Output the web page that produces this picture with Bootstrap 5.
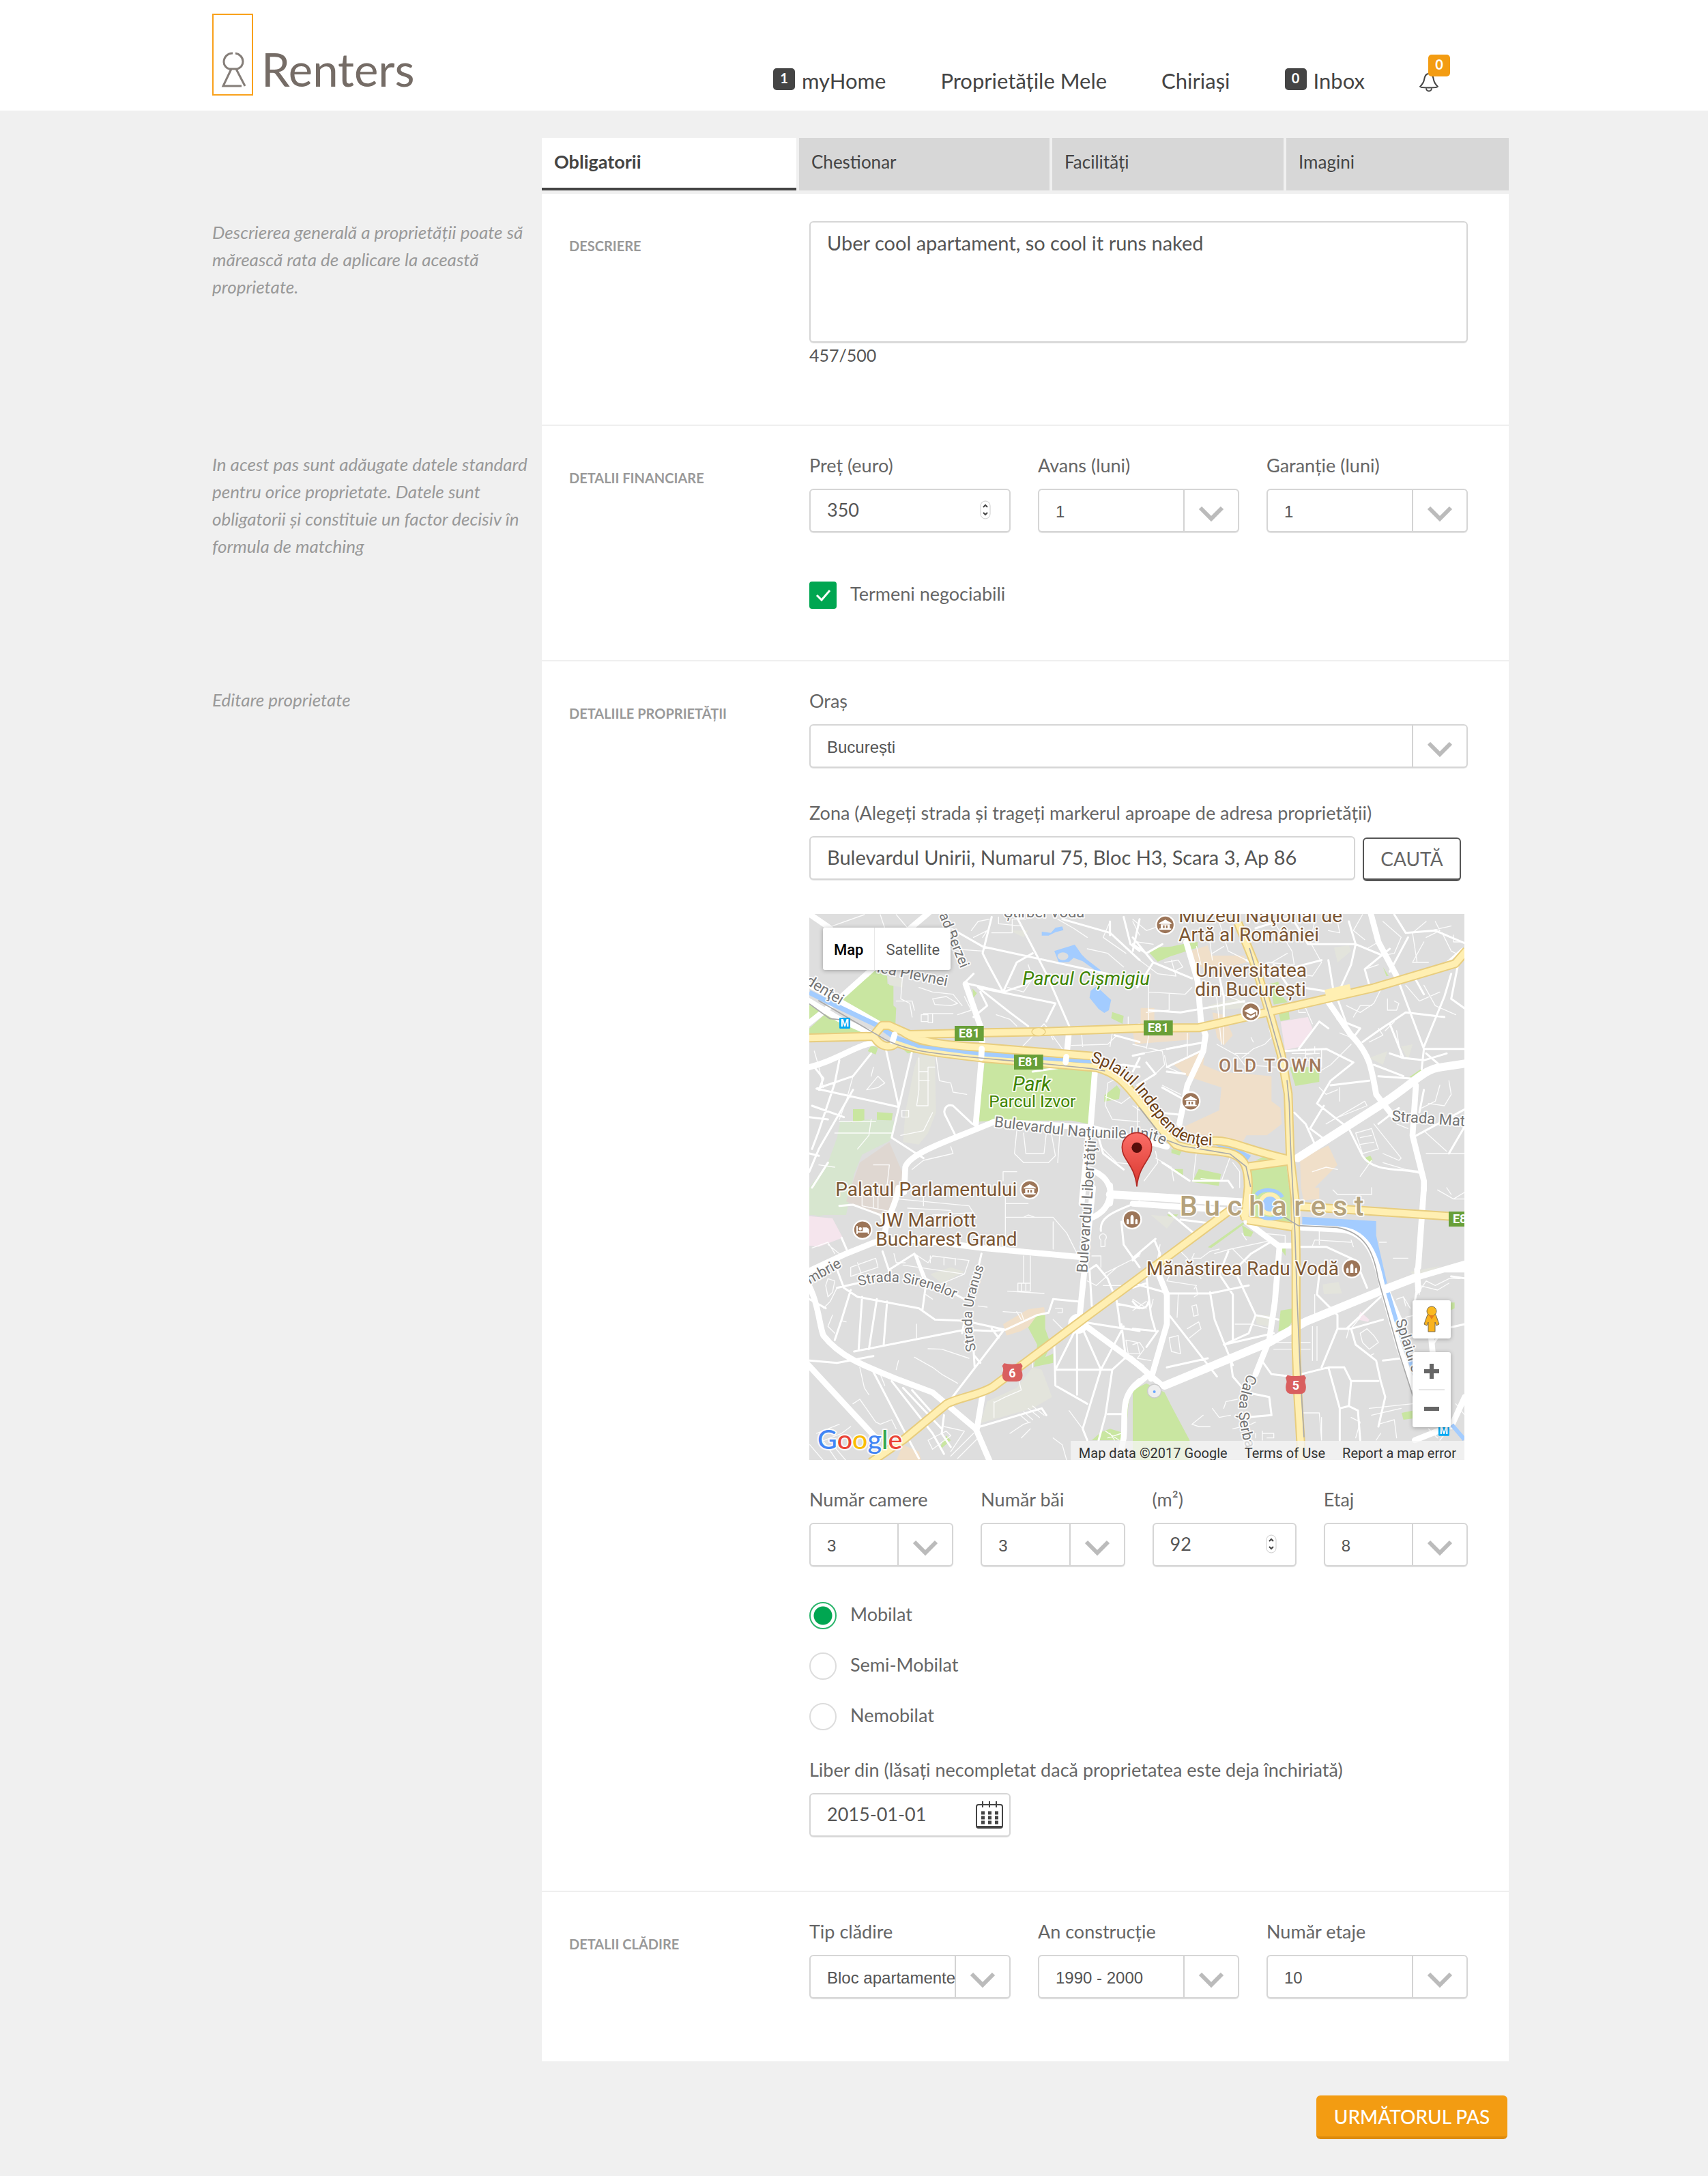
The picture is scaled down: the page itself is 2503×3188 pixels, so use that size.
<!DOCTYPE html>
<html lang="ro">
<head>
<meta charset="utf-8">
<meta name="viewport" content="width=device-width, initial-scale=1">
<title>Renters – Editare proprietate</title>
<link href="https://cdn.jsdelivr.net/npm/bootstrap@5.3.0/dist/css/bootstrap.min.css" rel="stylesheet">
<style>
body{background:#f0f0f0;color:#555;font-family:Lato,"Open Sans",sans-serif;font-size:27px;line-height:40px}
.page-wrap{max-width:1919px;margin:0 auto}
.site-head{background:#fff;height:162px}
.brand-link{padding:20px 0 22px 19px}
.main-nav{gap:80px;padding:0 103px 24px 0}
.main-nav a{color:#444;font-size:31px;text-decoration:none;display:flex;gap:10px}
.count-tag{width:32px;height:32px;border-radius:5px;background:#444;color:#fff;font-size:20px;line-height:28px;font-weight:700;text-align:center;margin-top:2px;flex:none}
.bell-link{width:28px;padding-top:9px}
.bell-link .count-tag{background:#f39c12;position:absolute;left:13px;top:-20px}
.side-note{flex:0 0 502px;padding:36px 14px 0 19px;font-style:italic;font-size:26px;color:#999}
.side-note p{margin:0}
.step-tabs{gap:4px;margin:40px 0 5px}
.step-tabs a{background:#d7d7d7;color:#444;font-size:26px;padding:15px 18px 18px;text-decoration:none;border-bottom:4px solid #d7d7d7}
.step-tabs a.active{background:#fff;font-size:27px;font-weight:700;border-color:#444}
.tab-a{flex:337 1 0}.tab-b{flex:331 1 0}.tab-c{flex:303 1 0}.tab-d{flex:290 1 0}
.panel{background:#fff;border-bottom:2px solid #efefef;padding:38px 60px 75px 40px}
.panel-text{padding:40px 60px 84px 40px}
.panel-end{border:0;padding-bottom:92px}
.panel h2{flex:0 0 352px;margin:26px 0 0;font-size:20px;line-height:24px;font-weight:700;color:#999}
.panel-text h2{margin-top:24px}
.stack{min-width:0}
.field label{display:block;margin-bottom:14px;color:#666}
.field-next{margin-top:46px}
.g-wide{--bs-gutter-x:40px}
.form-control,.form-select{border:2px solid #d6d6d6;border-radius:6px;height:64px;color:#555;box-shadow:0 1px 1px #e4e4e4}
.form-control{font-size:29px;padding:0 24px 4px}
.form-control.digits{font-size:27px}
textarea.form-control{height:178px;padding-top:10px;line-height:40px;resize:none}
input[type=number]{appearance:textfield;-moz-appearance:textfield}
input[type=number]::-webkit-inner-spin-button{appearance:none;-webkit-appearance:none;margin:0}
.form-select{font:24px/36px "Liberation Sans",Arial,sans-serif;padding:3px 79px 0 24px;background-image:url("data:image/svg+xml,%3Csvg xmlns='http://www.w3.org/2000/svg' viewBox='0 0 80 60'%3E%3Cpath d='M1 0V60' stroke='%23d3d3d3' stroke-width='2'/%3E%3Cpath d='M25 26 41 42 57 26' fill='none' stroke='%23bbb' stroke-width='6'/%3E%3C/svg%3E");background-size:80px 60px;background-position:right 0 center}
.char-count{font-size:25px;line-height:36px}
.over-icon{position:absolute;right:29px;top:17px}
.over-cal{right:11px;top:12px}
.tick{gap:20px;line-height:36px;color:#666}
.tick .form-check-input{width:40px;height:40px;margin:0;border:2px solid #ddd;flex:none}
.tick .form-check-input[type=checkbox]{border-radius:4px}
.tick .form-check-input[type=checkbox]:checked{background-color:#00a651;border-color:#00a651;background-size:40px;background-image:url("data:image/svg+xml,%3Csvg xmlns='http://www.w3.org/2000/svg' viewBox='0 0 40 40'%3E%3Cpath d='M11 20l7 7 12-14' fill='none' stroke='%23fff' stroke-width='3'/%3E%3C/svg%3E")}
.tick .form-check-input[type=radio]:checked{background:radial-gradient(circle,#00a651 13px,#fff 14px);border-color:#2bb56c}
.tick-solo{margin-top:72px}
.radio-list{gap:34px;margin:52px 0 38px}
.find-row{gap:11px}
.btn-find{height:64px;width:144px;flex:none;margin:2px 10px 0 0;padding:0;border:2px solid #555;border-bottom-width:4px;border-radius:6px;font-size:28px;color:#666;background:#fff}
.foot-row{padding:50px 2px}
.btn-next{height:64px;width:280px;padding:2px 0 0;border:0;border-bottom:4px solid #dd8b0d;border-radius:6px;background:#f39c12;color:#fff;font-size:28px;font-weight:500}
.map-box{max-width:960px;margin:48px 0 38px;font-family:Roboto,sans-serif;overflow:hidden}
.map-box>svg{width:100%;height:auto;display:block}
.map-ui{position:absolute;background:#fff;border-radius:3px;box-shadow:0 1px 6px rgba(0,0,0,.3)}
.map-ui button{border:0;background:none;padding:0;display:block}
.map-kind{left:20px;top:20px;height:62px;font-size:22px}
.map-kind button{padding:3px 16px 0}
.map-kind button:first-child{font-weight:500;color:#000;border-right:1px solid #e8e8e8}
.map-kind button:last-child{color:#565656}
.map-man{right:20px;bottom:178px;width:56px;height:56px}
.map-zoom{right:20px;bottom:48px;width:56px}
.map-zoom button{width:56px;height:55px}
.map-zoom button svg,.map-man svg{display:block;margin:auto}
.map-zoom hr{position:absolute;left:9px;right:9px;top:54px;margin:0;border-top:2px solid #e6e6e6;opacity:1}
.map-foot{position:absolute;right:0;bottom:0;height:28px;padding:0 12px;gap:25px;font-size:20px;line-height:36px;background:rgba(245,245,245,.75);color:#333}
.map-foot a{color:#333;text-decoration:none}
.pale{fill:none;stroke:#fff;stroke-linejoin:round;stroke-linecap:round}
.cas{fill:none;stroke:#e8cd7e;stroke-width:40;stroke-linejoin:round}
.yel{fill:none;stroke:#ffefb2;stroke-width:28;stroke-linejoin:round}
.halo text{paint-order:stroke;stroke:#fff;stroke-opacity:.85;stroke-width:12px;stroke-linejoin:round}
</style>
<script src="https://cdn.jsdelivr.net/npm/bootstrap@5.3.0/dist/js/bootstrap.bundle.min.js"></script>
</head>
<body>
<header class="site-head">
  <div class="page-wrap d-flex justify-content-between align-items-end h-100">
    <a class="brand-link d-block" href="#" aria-label="Renters">
      <svg width="310" height="120" viewBox="0 0 310 120" class="d-block">
        <rect x="1" y="1" width="58" height="118" fill="none" stroke="#f9a11b" stroke-width="2"/>
        <g fill="none" stroke="#857e79" stroke-width="3"><path d="M30 58c-8 0-13 6-13 13 0 5 4 9 8 10h12c5-2 8-6 8-11 0-6-5-11-11-12M28 81 16 106h27M35 81l13 25"/></g>
        <text x="72" y="107" font-family="Lato" font-size="67" fill="#756c66">Renters</text>
      </svg>
    </a>
    <nav class="main-nav d-flex" aria-label="Meniu">
      <a href="#"><span class="count-tag">1</span>myHome</a>
      <a href="#">Proprietățile Mele</a>
      <a href="#">Chiriași</a>
      <a href="#"><span class="count-tag">0</span>Inbox</a>
      <a href="#" class="bell-link position-relative" aria-label="Notificări">
        <svg width="28" height="28" viewBox="0 0 28 28" fill="none" stroke="#444" stroke-width="2"><path d="M14 1C9 1 8 5 7 10S4 17 1 20c0 2 26 2 26 0-3-3-5-5-6-10S19 1 14 1zM10 22c0 6 8 6 8 0"/></svg>
        <span class="count-tag">0</span>
      </a>
    </nav>
  </div>
</header>

<main class="page-wrap">
 <form>
  <div class="d-flex">
    <div class="side-note pt-0"></div>
    <nav class="step-tabs d-flex flex-grow-1" aria-label="Pași">
      <a class="tab-a active" href="#">Obligatorii</a>
      <a class="tab-b" href="#">Chestionar</a>
      <a class="tab-c" href="#">Facilități</a>
      <a class="tab-d" href="#">Imagini</a>
    </nav>
  </div>

  <section class="d-flex">
    <aside class="side-note"><p>Descrierea generală a proprietății poate să mărească rata de aplicare la această proprietate.</p></aside>
    <div class="panel panel-text d-flex flex-grow-1">
      <h2>DESCRIERE</h2>
      <div class="stack flex-grow-1">
        <textarea class="form-control" aria-label="Descriere">Uber cool apartament, so cool it runs naked</textarea>
        <div class="char-count">457/500</div>
      </div>
    </div>
  </section>

  <section class="d-flex">
    <aside class="side-note"><p>In acest pas sunt adăugate datele standard pentru orice proprietate. Datele sunt obligatorii și constituie un factor decisiv în formula de matching</p></aside>
    <div class="panel d-flex flex-grow-1">
      <h2>DETALII FINANCIARE</h2>
      <div class="stack flex-grow-1">
        <div class="row g-wide">
          <div class="col-4 field"><label for="pret">Preț (euro)</label>
            <div class="position-relative"><input id="pret" type="number" class="form-control digits" value="350">
            <svg class="over-icon" width="16" height="28" viewBox="0 0 16 28" fill="none"><rect x="1" y="1" width="14" height="26" rx="7" stroke="#ccc" stroke-width="1"/><path d="M5 10l3-3 3 3M5 18l3 3 3-3" stroke="#444" stroke-width="2"/></svg></div></div>
          <div class="col-4 field"><label for="avans">Avans (luni)</label><select id="avans" class="form-select"><option>1</option></select></div>
          <div class="col-4 field"><label for="garantie">Garanție (luni)</label><select id="garantie" class="form-select"><option>1</option></select></div>
        </div>
        <div class="tick tick-solo d-flex"><input class="form-check-input" type="checkbox" id="neg" checked><label for="neg">Termeni negociabili</label></div>
      </div>
    </div>
  </section>

  <section class="d-flex">
    <aside class="side-note"><p>Editare proprietate</p></aside>
    <div class="panel d-flex flex-grow-1">
      <h2>DETALIILE PROPRIETĂȚII</h2>
      <div class="stack flex-grow-1">
        <div class="field"><label for="oras">Oraș</label><select id="oras" class="form-select"><option>București</option></select></div>
        <div class="field field-next"><label for="zona">Zona (Alegeți strada și trageți markerul aproape de adresa proprietății)</label>
          <div class="d-flex find-row"><input id="zona" class="form-control" value="Bulevardul Unirii, Numarul 75, Bloc H3, Scara 3, Ap 86"><button type="button" class="btn btn-find">CAUTĂ</button></div></div>

        <div class="map-box position-relative">
          <svg viewBox="0 0 2880 2400" role="img" aria-label="Harta București">
            <rect width="2880" height="2400" fill="#dedede"/>
            <!-- parks, squares, blocks -->
            <g transform="translate(-18 -27)">
              <g fill="#c9e6a1"><path d="M300 275 360 300 362 335H388V430L400 440 395 545 155 410zM18 400 80 440 18 495zM100 455 285 550 18 558V530zM790 665 1262 712 1248 950 1170 935H830L760 940zM210 885h50v55h-50zM315 898l70 5-5 32h-65zM172 940h34v45h-34zM310 940l38 8-3 28h-35zM1350 458l50 17-5 35-50-25zM1315 825l55-45 15 20-5 40-65 12zM735 355l20 20-15 20zM290 605l30 10-10 30-35-15zM430 620l70 15-50 5z"/></g>
              <path fill="#d7e6cf" d="M155 935 215 945 270 930 390 935 385 1000 370 1025 250 1085 215 1170 180 1350 18 1350V1230L100 1120 140 1010z"/>
              <path fill="#dfd7d1" d="M370 1030 430 1170 400 1300 340 1360 180 1290 240 1120z"/>
              <path fill="#e3e4dc" d="M480 700 500 645 570 650 575 900 540 990 500 1040 430 1030 440 900zM360 300l60 10 10 40-60-10zM900 100l60 30 20-30z"/>
              <path fill="#a3ccff" d="M1095 190 1185 162 1215 205 1235 225 1300 275 1290 285 1220 235 1180 220 1160 238 1115 240zM1040 105 1080 110 1100 88 1130 82 1135 98 1100 107 1070 122 1040 122zM1280 345 1345 405 1335 450 1315 462 1290 445 1250 395 1255 365z"/>
              <ellipse cx="1133" cy="213" rx="24" ry="17" fill="#dedede"/>
            </g>
            <g transform="translate(1422 -27)">
              <path fill="#f0dfc9" d="M320 600 310 690 380 720 500 730 610 740 610 850 650 880 655 950 590 1000 500 1000 480 1035 240 985 230 960 380 890 390 790 240 740 180 690 270 650zM255 190 330 165 345 210 490 210 500 240 330 280 260 230zM35 440H95V520H35zM0 545H130L250 550V580L60 595 10 600zM350 460 400 470 440 560 400 605 370 570zM735 1100 860 1045 900 1130 800 1230H740z"/>
              <path fill="#f5e5ed" d="M650 500 770 480 790 530 740 610 670 625z"/>
              <path fill="#c9e6a1" d="M70 195 110 175 170 170 240 155 285 150V175L160 215 110 237zM600 335 640 325 650 380 680 415 620 425zM640 455l45-10 5 45-40 8zM690 700H820V765L715 783zM1215 745 1265 710 1270 718 1225 745zM290 1148 388 1170 378 1222 262 1205zM520 1135 675 1130 690 1250H510zM185 1148h36v27l-36-10zM170 1060l45 10-10 18-35-10zM1015 1100l30-10 10 20-20 15zM1100 260l25 40h-10zM540 1110l50-22 80 12z"/>
              <path fill="#e3e4dc" d="M885 175 950 165 960 190 900 240zM1040 660 1120 630 1100 690zM1180 610l50-10-20 70zM330 430 480 390 500 440 350 450z"/>
              <path fill="#a3ccff" d="M350 1038 430 1042 520 1090 505 1110 440 1078z"/>
            </g>
            <g transform="translate(-18 1203)">
              <path fill="#d7e6cf" d="M18 0H170L178 60 130 110 60 125 18 115z"/>
              <path fill="#f5e5ed" d="M18 125 120 135 165 220 60 260 18 255z"/>
              <path fill="#f0dfc9" d="M870 600 980 535 1050 525 1055 550 1020 590 950 630 885 650zM430 1130 500 1160 510 1200H400z"/>
              <path fill="#c9e6a1" d="M980 615 1020 560H1055V620L1080 690 1055 745 1090 730V770L1005 788 1020 690zM1470 870 1430 910 1420 960 1410 1110 1260 1110 1300 1075 1340 1060 1390 1075 1410 920zM590 1145 620 1090 640 1110 600 1145z"/>
              <path fill="#e3e4dc" d="M550 380 640 350 700 370 600 420zM800 940 930 880 1000 790 1040 800 1085 920 1000 970 770 1035z"/>
            </g>
            <g transform="translate(1422 1203)">
              <path fill="#c9e6a1" d="M0 890 60 860 140 900 170 960 250 1110 250 1200H0zM515 0H700L690 150 510 135zM480 165 530 195 520 215 490 212zM330 262 485 152 490 160 345 265zM650 540 700 532V590L680 620 640 632zM1182 990 1230 980V1015L1190 1020zM1390 505h25v25l-20 10zM650 270l22-20v50zM150 118h50l-25 25z"/>
              <path fill="#e3e4dc" d="M835 425 905 415 920 465 840 468zM540 560 620 560 600 610 545 600zM80 120 190 130 150 180zM1220 370 1350 345 1260 410z"/>
              <path fill="#f5e5ed" d="M1000 545 1040 580 1035 590 990 580z"/>
              <path fill="#f0dfc9" d="M740 0H820V50L750 55z"/>
              <path fill="#a3ccff" d="M745 128 1070 147V210L1118 420 1104 428 1045 260 980 195 900 168 745 165z"/>
            </g>
            <!-- lanes -->
            <g class="pale" stroke-width="4" stroke-opacity=".9">
              <path transform="translate(-18 -27)" d="M120 80 260 30M330 30 350 90M400 30 460 100 640 90M730 100 760 60 810 50M740 130 800 100 780 130M820 110h90v-60h60M850 40v30l100 10M640 180 780 190M980 250 1000 310 960 370 890 350M1110 50 1180 90 1240 130M1340 60 1310 130 1410 200M1240 180 1330 200 1400 260M430 270 420 400 460 420 470 480M400 410 470 410 480 450M500 350 560 370 650 380 690 430M560 400 620 390 670 420 640 430 570 425zM520 465h130M560 465v40h-20M510 470h30v30h-30zM700 390 730 450 670 470M840 470 900 490 930 520M950 615 1050 510 1130 620M1060 520 1090 580M1170 605 1330 600 1370 560M1215 550 1220 610M1350 550 1340 610M1420 480V520L1470 510M500 660V800L490 870H540V700H570M540 720H500M545 760H500M575 650 590 760 640 770 650 810 710 820M40 630 60 700 80 790M270 800 320 740 350 770 320 790zM300 700 290 740M210 740 180 850 150 930M425 890h30v30h-30zM150 940H310M290 930 280 1000 230 1060M130 990H380M640 1050 650 1080 520 1110 470 1150M930 980 920 1080 960 1120H1070L1100 1090 1080 980M960 990 970 1080H1050L1060 990M1120 980 1110 1120M870 1200V1160H930M1320 830 1390 860 1470 800M1390 700 1370 750 1330 770 1320 870 1350 930 1470 940M1300 1050 1370 1120 1470 1130M1440 60 1470 120M420 1000 520 980 560 900M60 1130 130 1140M300 1130 370 1130 360 1220"/>
              <path transform="translate(1422 -27)" d="M0 50 60 100 120 80 180 60M20 150 90 160M30 230 110 290 190 300 170 230M140 240 200 230 220 260 180 280M70 330V560L60 620M70 370 230 380 260 350M160 380V450L60 460M340 330 370 400 390 600M270 370 340 360 500 420M330 80 350 230M280 170 300 250M370 30 420 190 500 230M400 170 350 200M620 60 700 190 710 250 590 240M560 270 680 200M800 60 780 150 830 240 790 300 730 290M900 60 910 110 860 100M1010 30 970 100 1020 140M1030 180 1080 150M1100 60 1180 130M1290 60 1230 110 1310 100 1400 80M1360 110 1400 190 1440 210M1180 130 1150 200 1100 210M1230 110 1250 240M1280 150 1230 240H1300M1410 120v30h30M1330 60 1350 100 1290 130M1020 270 1080 250M940 430 1000 460 1060 420 1090 360M970 480 1000 430 1050 430M1120 400v50h40l10-30-20-10M1200 340 1260 410 1350 370M1280 340 1330 430 1420 470M910 550 960 570M1110 540 1150 500M1160 540 1180 660M1040 590 1100 560 1080 530M960 600 870 690 820 720M800 610 800 640 760 645M830 620V700M700 640H820M700 670H820M760 620V680M700 430 760 440 790 510M730 440v20h30M240 550v100M520 570 530 590M600 530 610 570 580 600 530 620 480 660M370 600 460 650 490 690 630 700M140 650 150 700 220 730M130 780 210 820M40 640 150 620 240 600M0 600 130 630 140 690 90 740M400 520V600M450 640H510M820 790 850 820 900 800M910 790v60M880 930 1030 870 1020 850 850 950M980 990 1050 970 1080 1060 1010 1080zM1000 1010 1050 1000M1000 1040 1060 1030M1160 950 1210 970M1060 950 1180 1100 1170 1110 1100 1080M1270 880 1330 850 1350 780M1300 860 1370 870 1400 820 1390 760M1280 980 1380 1070M1290 1080 1460 1080M1100 1120 1200 1150 1280 1160M1000 1180 1050 1110M790 1160 850 1140 900 1150M280 1070 265 1200M430 1090 390 1200 300 1190M440 1120 470 1160V1230M100 1070 110 1120 50 1200M100 1100 170 1140 180 1200M20 870V960M0 870 30 890"/>
              <path transform="translate(-18 1203)" d="M250 30V80L400 110M300 20V90M320 30V90M410 50 720 80 740 110 560 120M520 0v80M450 90 640 100M880 30V250M880 130H1090L1150 200 1190 280M960 130 980 120 1010 130M1090 150V270M880 70H980M960 300V420M990 300V420M935 420H990V455H935zM950 420v35M970 420v35M890 455 1050 465M200 350 310 310 320 350 230 380 200 390zM230 330 250 390M390 290 400 330H440M480 290 540 330 560 300 720 320 700 380 580 430M550 300V330M610 310v30M660 310v30M30 265 100 240 130 290M100 250 150 290M90 430 100 400 130 410 120 460 100 480zM140 440 110 500 80 530M120 560 100 610 130 640M160 585 180 590M490 600V660M540 708 600 710 720 750M480 745 560 790 600 820 670 860M430 340 700 380M530 470 560 490M760 520 800 525M870 545 950 550 960 580M930 545 950 580M1100 530H1130V550H1110M1090 580 1150 640M1090 700H1080M1000 760V790M830 940V1010M940 850 950 890 880 920 830 945M1260 300H1300V350M1240 410 1280 430 1370 350M1310 380 1470 300M1310 430 1400 430M1300 260v-30a15 15 0 1 1 18 0v28zM1410 670 1460 680 1470 730H1420zM1160 980 1220 1060M1090 1100 1130 1130 1150 1200M240 790 260 880 280 910M330 820 350 870M410 760 400 800M210 950 240 930 310 1030 330 1040 380 1020 400 1060M50 1080 150 1040M60 1120 160 1080 200 1050M540 1110 620 1070 640 1090 560 1150zM610 1050 700 1070 640 1160M640 1180 740 1080M670 1190 760 1100M900 1080 960 1040 990 1030M980 970 1030 1010M1000 960 1050 1000M960 985 1000 1020M940 995 980 1030M950 1100 990 1060M120 1130 180 1200M70 1100 140 1200M20 1130 80 1200M1320 1070 1380 1110M1340 1080 1360 1110M1330 1100 1390 1080"/>
              <path transform="translate(1422 1203)" d="M880 10 900 30H1050V0M1340 10 1410 50 1460 20M1380 0 1400 30M1410 50H1460M790 255 800 230 960 240M820 170V250M960 230 970 260M1085 240h30M1145 310h65M270 290 260 310 300 310 340 280 380 270M190 260 240 310 300 400M200 350 170 370 150 410 280 430 270 445M120 250 110 310M360 290 430 270 620 230M440 270 500 330M480 200 500 230M560 200 670 210V250M0 490 60 530M60 500 0 540M80 530 90 490M200 470 195 570M270 480 285 470 280 440M260 520l20-5 8 45-20 5zM240 620 290 590 300 620 250 660M160 660 200 650 210 730 170 720zM0 690 30 680 50 710 20 750 80 760M450 600 520 600 600 620M270 800 300 790M350 970 380 1010 430 1000M400 970 410 940 460 930M440 1060 520 1040 540 1030M570 1070V1110M570 1080H620V1100H590M540 1100V1080M790 610V760M810 610V760M800 470V580H740M610 680H780M620 710H780M1000 640 1030 620 1060 650 1080 680 1040 710 1010 680zM940 660 950 620M960 620 1000 570M1040 740 1060 730M1160 490 1190 480 1200 520M1190 480 1220 530M1250 470 1290 410 1330 430 1390 400 1440 400M1260 470V430L1340 450 1390 420M1240 560 1200 570M1040 970 1230 950M1050 1000 1180 970M1080 1040 1150 1020 1160 1100M1090 1080 1070 1110M960 1010 1000 1030 980 1100M830 1010V1110M750 990 820 990 830 1110M310 1000 260 1040 290 1050 340 1050M1350 1110 1390 1060M1300 1060 1340 1100M1420 950 1460 1000"/>
            </g>
            <g class="pale" stroke-width="9">
              <path transform="translate(-18 -27)" d="M820 40 780 200 800 240 870 370 930 240 1000 200M640 90 780 170 1330 290M930 40 1060 290 1165 530M1130 50 1340 110 1470 230M1400 40 1430 160 1470 190M1340 60V120M980 520 900 460 760 350 1100 420M700 330 870 370 960 340 1000 310M770 370 800 430 740 480M700 330 740 290M350 600 410 870M470 630 380 1010 520 1100M290 640 210 740 50 795 410 875M40 700 80 750 60 800M150 670 130 770 60 980 30 1060M18 920 100 930M30 870 170 920M210 800 60 1060 18 1160M18 1080 60 1090M735 950 650 870C620 860 600 890 620 920L660 1000M1290 700 1400 690 1470 700M1470 660 1440 720M1360 560 1470 590M1290 1010 1310 1080 1400 1150M1060 500 1100 420M100 1120 30 1230M1000 720 1140 700"/>
              <path transform="translate(1422 -27)" d="M0 130 90 240 20 350M0 160 60 200 130 160M30 50 0 190M90 240 260 310M70 450 210 460 490 410M500 230 600 290 830 230M540 90 700 40M620 250 680 340 870 370M860 230 880 350M710 60 770 160 980 160 1100 210M980 160 960 250 910 360M980 160 950 60M1150 30 1200 110 1330 100 1470 160M1130 180 1020 270 1040 340M1210 130 1130 280M1160 300 1280 620 1270 710M1280 380 1230 290 1370 250 1450 180M1400 290 1370 390 1280 610M1370 480 1200 460 1080 540 1010 590M1430 250 1400 400 1470 450M1130 510 1190 660 1130 640M1190 660 1280 670 1380 640M1280 620 1460 620M1290 640 1360 700M1080 740 1220 750M1060 690 1190 740M900 490 1000 530 970 570M900 400 940 510M730 620 820 500 860 530M650 630 850 620 970 680 870 760 810 860 950 970M870 780 1040 760M710 900 760 950 810 1060M840 870 780 970 860 1030M950 970 1010 1090C1060 1170 1200 1140 1280 1170M1080 950 1170 880M1280 800 1260 900M1390 1080 1460 960M1470 880 1230 1010M150 620 320 590M150 700 320 620M0 650 50 640M150 720 230 730M130 790 220 840M60 680 100 730 20 780M210 910 120 900M400 490V390L380 300M130 1120 250 1200M265 1200H420L440 1230"/>
              <path transform="translate(-18 1203)" d="M150 80 210 75 330 120 360 200M160 220 190 290M140 360 170 440 230 480 500 530 570 580 700 585 880 625 1020 560 1070 550 1090 490 1200 500M340 280 370 370M370 360 480 290 530 430 515 540M490 300 530 400 700 490M140 440 230 420M200 450 160 580 130 670M250 480 235 710M315 490 280 710M360 500 345 690M215 720 700 625 820 630 880 625M820 620 850 660M775 290 740 440M740 710 745 790M870 630 640 930M745 740 770 770M300 810 430 1060 500 1190M380 850 560 1080 610 1170M430 880 600 1060M470 890 550 980M1185 630 1100 800H1350L1405 750M1195 600V910M1215 610 1300 800 1400 610M1220 590 1470 630M1095 690 1100 870 1240 950M1350 800 1320 1000 1290 1110M1300 800 1220 1060 1240 1110M1330 995H1390M1390 600 1410 750M1385 610 1370 500 1330 400 1280 340 1250 360 1260 520M1370 510 1470 530M1390 150 1400 250 1470 350M1300 190C1290 120 1380 100 1470 60M18 760 140 770 300 740M610 1000 600 1080 640 1140M770 1050 1040 970 1060 1000M18 490 90 530M1440 320 1470 290M700 585 690 640"/>
              <path transform="translate(1422 1203)" d="M160 110 280 210M210 140 370 160M100 225 0 310M95 230 120 290 110 380M0 420 160 465H340L510 430M60 390 80 560 100 630 0 620M60 420 0 440M0 500C30 540 60 540 70 500M160 560 370 830M150 790 330 750M340 460 360 580 440 780M380 380 440 470 440 670M460 390 540 560 510 640 400 690M540 560 640 580M400 690 620 640M430 760 440 830 500 900 600 920 610 1000 490 1010M560 750 610 820 700 830 860 790 930 790 960 850H1080M710 260 850 260 980 320 1030 440M820 380 810 470 900 560V620L830 790M900 620H960L980 690 1070 760 1090 850 1110 920 1080 1050M960 620 1100 580M960 850 950 960 910 970V1110M950 960 990 980 1000 1110M1090 480 940 620M1400 390 1470 400M1250 440 1240 500M1310 700 1370 620 1460 600M1100 760 1180 750M420 280 380 380M620 230 520 290 430 380M500 900 600 920M860 790 910 970M110 630 60 700"/>
            </g>
            <!-- streets -->
            <g class="pale" stroke-width="26">
              <path transform="translate(-18 -27)" d="M0 15 110 90M545 20 450 100M300 265 150 400 0 520M705 335 770 520 780 610 750 950M0 705C150 670 220 600 320 590M1160 540 1145 690M1275 700 1255 960M435 1250 440 1140C460 1070 700 1000 830 940L1250 965 1480 1020M1245 1000 1215 1300M1250 1150C1340 1180 1350 1240 1340 1300M0 330 150 410 350 525M0 400 150 490 310 560"/>
              <path transform="translate(1422 -27)" d="M235 150 285 320 300 500 320 560 310 630 240 780 205 950M0 1010 150 1050M1045 20 1080 150 1160 300M850 400 960 560C1040 640 1050 700 1070 820L1140 910M1245 780 1230 1000 1280 1200V1240"/>
              <path transform="translate(-18 1203)" d="M0 375 180 290 330 230H500L780 265 1210 305M410 0C400 80 360 120 350 200M0 400C60 500 60 600 80 650 150 740 250 780 400 840L560 900 750 1060 810 1200M0 765 320 1110M780 910 755 1060M1265 0 1205 580M1340 -10C1350 80 1300 120 1240 140M1345 30 1480 42M1210 590 1480 790M1470 850C1380 920 1410 1000 1400 1100L1380 1200"/>
              <path transform="translate(1422 1203)" d="M0 70 420 100M110 370 150 470 150 600 80 840M-10 750 130 870M60 830 0 880M500 150 640 255H700M645 260 625 500 600 670 540 820M740 175 920 185C1040 200 1070 310 1100 450L1170 700 1235 880M1250 360 1255 450M1120 460 1180 600M1280 0 1255 350M1310 640 1320 740M1370 360H1470M1400 1050 1460 920M1100 450 1230 400 1470 330M1240 1110 1340 1070"/>
            </g>
            <g class="pale" stroke-width="36">
              <path d="M2147 1073 2522 833C2672 733 2700 683 2780 673L2880 658M1322 1233 1442 1240 1940 1270M1562 2073 2022 1883 2180 1793 2522 1653 2660 1600"/>
            </g>
            <circle cx="1182" cy="1801" r="44" fill="#fff"/>
            <circle cx="1517" cy="2097" r="30" fill="#eee" stroke="#ccc" stroke-width="4"/><circle cx="1517" cy="2100" r="6" fill="#6aa8ff"/>
            <path d="M0 345 90 390 310 495 380 545 480 580 780 618 1245 648" fill="none" stroke="#a3ccff" stroke-width="22"/>
            <path d="M2544 1665 2580 1785 2665 2033M2825 2245 2880 2310" fill="none" stroke="#a3ccff" stroke-width="18"/>
            <!-- main roads: casing below, fill above -->
            <g class="cas">
              <path d="M0 545 280 538 320 490 350 490 440 530 780 522 1010 518 1450 502 1712 500 2022 430 2480 325 2840 218 2890 160M415 520C480 565 600 578 780 588L1245 625M285 540C315 590 360 590 385 565 470 600 600 615 760 633L1262 675C1362 700 1400 760 1450 820L1542 940 1612 1015C1682 1045 1820 1033 1872 1060 1912 1080 1930 1110 1930 1200L1915 1345M1885 40 1962 230 2022 430 2075 620 2105 790 2115 1080 2135 1250 2140 1500 2140 1900 2147 2100 2165 2400M1772 998C1852 990 1922 1040 2115 1080M1932 1110 2115 1085M1925 1345 2122 1375M2150 1285 2880 1333M1855 1298 1422 1620 1212 1775 805 2080C745 2115 660 2125 605 2153L415 2310 270 2410M1900 1300 1920 1340"/>
            </g>
            <g class="yel">
              <path d="M0 545 280 538 320 490 350 490 440 530 780 522 1010 518 1450 502 1712 500 2022 430 2480 325 2840 218 2890 160M415 520C480 565 600 578 780 588L1245 625M285 540C315 590 360 590 385 565 470 600 600 615 760 633L1262 675C1362 700 1400 760 1450 820L1542 940 1612 1015C1682 1045 1820 1033 1872 1060 1912 1080 1930 1110 1930 1200L1915 1345M1885 40 1962 230 2022 430 2075 620 2105 790 2115 1080 2135 1250 2140 1500 2140 1900 2147 2100 2165 2400M1772 998C1852 990 1922 1040 2115 1080M1932 1110 2115 1085M1925 1345 2122 1375M2150 1285 2880 1333M1855 1298 1422 1620 1212 1775 805 2080C745 2115 660 2125 605 2153L415 2310 270 2410M1900 1300 1920 1340"/>
              <ellipse cx="1008" cy="518" rx="30" ry="18" fill="#ffefb2" stroke="#e8cd7e" stroke-width="4"/>
              <path d="M2270 355 2380 330" stroke-width="44"/>
            </g>
            <path d="M380 548 480 582 780 620 1240 650" fill="none" stroke="#a3ccff" stroke-width="14"/>
            <g class="pale" stroke-width="26" stroke-linecap="butt"><path d="M758 592 756 632M1130 628 1127 652M375 530 366 560"/></g>
            <g fill="none" stroke="#aaa" stroke-width="5">
              <path d="M0 395 90 460 140 465M40 380 330 550C480 630 700 620 1240 680L1300 690M1935 150 2015 420 2080 650M2100 730 2110 830 2115 1000 2135 1400 2145 1700 2160 2050 2175 2300M1450 850 1560 990 1640 1020 1850 1055 1920 1110 1940 1200M2010 1285 2150 1370 2320 1378C2440 1400 2480 1480 2500 1600L2590 1920 2660 2140"/>
            </g>
            <g fill="none" stroke="#a3ccff" stroke-width="16"><path d="M1965 1235C1985 1205 2060 1205 2080 1245M1980 1325C2010 1345 2050 1340 2080 1330"/></g>
            <circle cx="2025" cy="1275" r="42" fill="#a3ccff" stroke="#ffefb2" stroke-width="18"/>
            <!-- road shields -->
            <g font-family="Roboto" font-weight="700" font-size="54" fill="#fff" text-anchor="middle">
              <path fill="#689f38" d="M639 492h128v66H639zM900 618h128v66H900zM1470 468h128v66H1470zM2811 1308h128v66H2811z"/>
              <text x="703" y="544">E81</text><text x="964" y="670">E81</text><text x="1534" y="520">E81</text><text x="2875" y="1360">E81</text>
              <g fill="#00a8f3"><rect x="132" y="456" width="48" height="48" rx="4"/><rect x="2766" y="2246" width="48" height="48" rx="4"/></g>
              <text x="156" y="494" font-size="42">M</text><text x="2790" y="2285" font-size="42">M</text>
              <path fill="#d95f5f" d="M856 1975q34 8 74 0l8 12q-8 14-2 28 8 40-26 40h-34q-34 0-26-40 6-14-2-28zM2102 2027q34 8 74 0l8 12q-8 14-2 28 8 43-26 43h-34q-34 0-26-43 6-14-2-28z"/>
              <text x="892" y="2038">6</text><text x="2139" y="2091">5</text>
            </g>
            <!-- place names -->
            <g class="halo" font-family="Roboto" font-size="84" fill="#7b5532">
              <g fill="#3d8400"><text x="937" y="312" font-style="italic" font-size="83">Parcul Cişmigiu</text><text x="894" y="776" font-style="italic" font-size="86">Park</text><text x="790" y="850" font-size="73">Parcul Izvor</text></g>
              <text x="1624" y="36">Muzeul Naţional de</text><text x="1624" y="120">Artă al României</text>
              <text x="1698" y="276">Universitatea</text><text x="1696" y="360">din Bucureşti</text>
              <text x="115" y="1240">Palatul Parlamentului</text>
              <text x="292" y="1373">JW Marriott</text><text x="292" y="1457">Bucharest Grand</text>
              <text x="1482" y="1586">Mănăstirea Radu Vodă</text>
              <text x="1800" y="693" font-weight="500" font-size="78" letter-spacing="9" fill="#a1795b">OLD TOWN</text>
              <text x="1628" y="1326" font-weight="500" font-size="124" letter-spacing="31" fill="#b5a27c">Bucharest</text>
              <g font-size="66" fill="#757575">
                <path id="l1" fill="none" d="M812 935C960 950 1200 990 1400 985 1480 985 1520 990 1560 1020"/><text><textPath href="#l1">Bulevardul Naţiunile Unite</textPath></text>
                <path id="l2" fill="none" d="M1222 1578 1260 1000"/><text><textPath href="#l2">Bulevardul Libertăţii</textPath></text>
                <path id="l3" fill="none" d="M220 1636C330 1600 470 1610 660 1700"/><text font-size="61"><textPath href="#l3">Strada Sirenelor</textPath></text>
                <path id="l4" fill="none" d="M734 1918C700 1800 710 1700 780 1520"/><text font-size="60"><textPath href="#l4">Strada Uranus</textPath></text>
                <path id="l5" fill="none" d="M1930 2020C1875 2120 1870 2250 1950 2420"/><text font-size="64"><textPath href="#l5">Calea Şerba</textPath></text>
                <path id="l6" fill="none" d="M2577 1788 2680 2110"/><text font-size="64"><textPath href="#l6">Splaiul U</textPath></text>
                <path id="l7" fill="none" d="M570 4 690 300"/><text font-size="62"><textPath href="#l7">ad Berzei</textPath></text>
                <path id="l8" fill="none" d="M295 255 640 325"/><text font-size="66"><textPath href="#l8">lea Plevnei</textPath></text>
                <path id="l9" fill="none" d="M-20 305 150 410"/><text font-size="66"><textPath href="#l9">denţei</textPath></text>
                <text x="2560" y="910" transform="rotate(4 2560 910)">Strada Mat</text>
                <text x="2" y="1628" font-size="64" transform="rotate(-29 2 1628)">mbrie</text>
                <text x="855" y="14" font-size="66">Ştirbei Vodă</text>
              </g>
              <path id="l0" fill="none" d="M1235 650C1370 690 1430 760 1500 860 1580 970 1620 1020 1800 1018"/><text font-size="71" fill="#6d3f14"><textPath href="#l0">Splaiul Independenţei</textPath></text>
            </g>
            <g fill="#9c7558" stroke="#fff" stroke-width="7"><circle cx="1565" cy="48" r="40"/><circle cx="1941" cy="430" r="40"/><circle cx="1677" cy="823" r="40"/><circle cx="969" cy="1211" r="40"/><circle cx="234" cy="1388" r="40"/><circle cx="1419" cy="1343" r="40"/><circle cx="2385" cy="1558" r="40"/></g>
            <defs>
              <path id="museum" d="M0-23 27-8V-4H-27V-8zM-20-2h40v18h6v6h-52v-6h6z"/>
              <path id="towers" d="M-24 20V2q5-10 10 0v18zM-7 20V-12q7-18 14 0v32zM14 20V2q5-10 10 0v18z"/>
            </defs>
            <g fill="#fff"><use href="#museum" x="1565" y="48"/><use href="#museum" x="1677" y="823"/><use href="#museum" x="969" y="1211"/><use href="#towers" x="1419" y="1343"/><use href="#towers" x="2385" y="1558"/>
              <path d="M1912 426 1941 411 1970 426V446H1964V430L1941 442zM1922 438 1941 448 1960 438V450L1941 460 1922 450zM207 1372h6v22h22v-16h16q12 2 12 14v14h-6v-6h-44v6h-6z"/><circle cx="224" cy="1384" r="7"/></g>
            <g fill="#9c7558"><path d="M1555 50h7v12h-7zM1568 50h7v12h-7zM1667 825h7v12h-7zM1680 825h7v12h-7zM959 1213h7v12h-7zM972 1213h7v12h-7z"/></g>
            <!-- pin -->
            <linearGradient id="pin" x2="0" y2="1"><stop stop-color="#fb6e67"/><stop offset="1" stop-color="#d9362e"/></linearGradient>
            <path d="M1440 1198C1430 1100 1375 1080 1375 1026a65 65 0 0 1 130 0C1505 1080 1450 1100 1440 1198z" fill="url(#pin)" stroke="#b12a25" stroke-width="5"/><circle cx="1440" cy="1027" r="23" fill="#590e0b"/>
            <g class="halo"><text x="36" y="2352" font-family="Lato" font-weight="500" font-size="118" fill="#4285f4">G<tspan fill="#ea4335">o</tspan><tspan fill="#fbbc05">o</tspan><tspan>g</tspan><tspan fill="#34a853">l</tspan><tspan fill="#ea4335">e</tspan></text></g>
          </svg>
          <div class="map-ui map-kind d-flex"><button type="button">Map</button><button type="button">Satellite</button></div>
          <div class="map-ui map-man"><button type="button" class="w-100 h-100" aria-label="Street View"><svg width="24" height="40" viewBox="0 0 24 40"><path d="M6 13h12l5 14-4 2-2-5v14H7V24l-2 5-4-2z" fill="#f9b21d" stroke="#7a6a4a" stroke-width="1"/><circle cx="12" cy="8" r="7" fill="#fbb91f" stroke="#7a6a4a"/><path d="M8 14h8l-4 6z" fill="#e37d1b"/></svg></button></div>
          <div class="map-ui map-zoom"><button type="button" aria-label="Mărește"><svg width="22" height="22" viewBox="0 0 22 22"><path d="M8 0h6v8h8v6h-8v8H8v-8H0V8h8z" fill="#666"/></svg></button><button type="button" aria-label="Micșorează"><svg width="22" height="22" viewBox="0 0 22 22"><path d="M0 8h22v6H0z" fill="#666"/></svg></button><hr></div>
          <div class="map-foot d-flex"><span>Map data ©2017 Google</span><a href="#">Terms of Use</a><a href="#">Report a map error</a></div>
        </div>

        <div class="row g-wide">
          <div class="col-3 field"><label for="camere">Număr camere</label><select id="camere" class="form-select"><option>3</option></select></div>
          <div class="col-3 field"><label for="bai">Număr băi</label><select id="bai" class="form-select"><option>3</option></select></div>
          <div class="col-3 field"><label for="mp">(m²)</label>
            <div class="position-relative"><input id="mp" type="number" class="form-control digits" value="92">
            <svg class="over-icon" width="16" height="28" viewBox="0 0 16 28" fill="none"><rect x="1" y="1" width="14" height="26" rx="7" stroke="#ccc" stroke-width="1"/><path d="M5 10l3-3 3 3M5 18l3 3 3-3" stroke="#444" stroke-width="2"/></svg></div></div>
          <div class="col-3 field"><label for="etaj">Etaj</label><select id="etaj" class="form-select"><option>8</option></select></div>
        </div>
        <div class="d-flex flex-column radio-list">
          <div class="tick d-flex"><input class="form-check-input" type="radio" name="mob" id="m1" checked><label for="m1">Mobilat</label></div>
          <div class="tick d-flex"><input class="form-check-input" type="radio" name="mob" id="m2"><label for="m2">Semi-Mobilat</label></div>
          <div class="tick d-flex"><input class="form-check-input" type="radio" name="mob" id="m3"><label for="m3">Nemobilat</label></div>
        </div>
        <div class="field pb-1"><label for="liber">Liber din (lăsați necompletat dacă proprietatea este deja închiriată)</label>
          <div class="row g-wide"><div class="col-4"><div class="position-relative"><input id="liber" class="form-control digits" value="2015-01-01">
          <svg class="over-icon over-cal" width="40" height="40" viewBox="0 0 40 40" fill="none" stroke="#444"><rect x="1" y="5" width="38" height="34" rx="3" stroke-width="2"/><path d="M2 37h36" stroke-width="2"/><path d="M10 0v9M20 0v9M30 0v9" stroke-width="2"/><path d="M8 17h25M8 24h25M8 31h25" stroke-width="5" stroke-dasharray="5 5"/></svg></div></div></div></div>
      </div>
    </div>
  </section>

  <section class="d-flex">
    <aside class="side-note"></aside>
    <div class="panel panel-end d-flex flex-grow-1">
      <h2>DETALII CLĂDIRE</h2>
      <div class="stack flex-grow-1">
        <div class="row g-wide">
          <div class="col-4 field"><label for="tip">Tip clădire</label><select id="tip" class="form-select"><option>Bloc apartamente</option></select></div>
          <div class="col-4 field"><label for="an">An construcție</label><select id="an" class="form-select"><option>1990 - 2000</option></select></div>
          <div class="col-4 field"><label for="etaje">Număr etaje</label><select id="etaje" class="form-select"><option>10</option></select></div>
        </div>
      </div>
    </div>
  </section>
  <div class="d-flex justify-content-end foot-row"><button type="submit" class="btn btn-next">URMĂTORUL PAS</button></div>
 </form>
</main>
</body>
</html>
